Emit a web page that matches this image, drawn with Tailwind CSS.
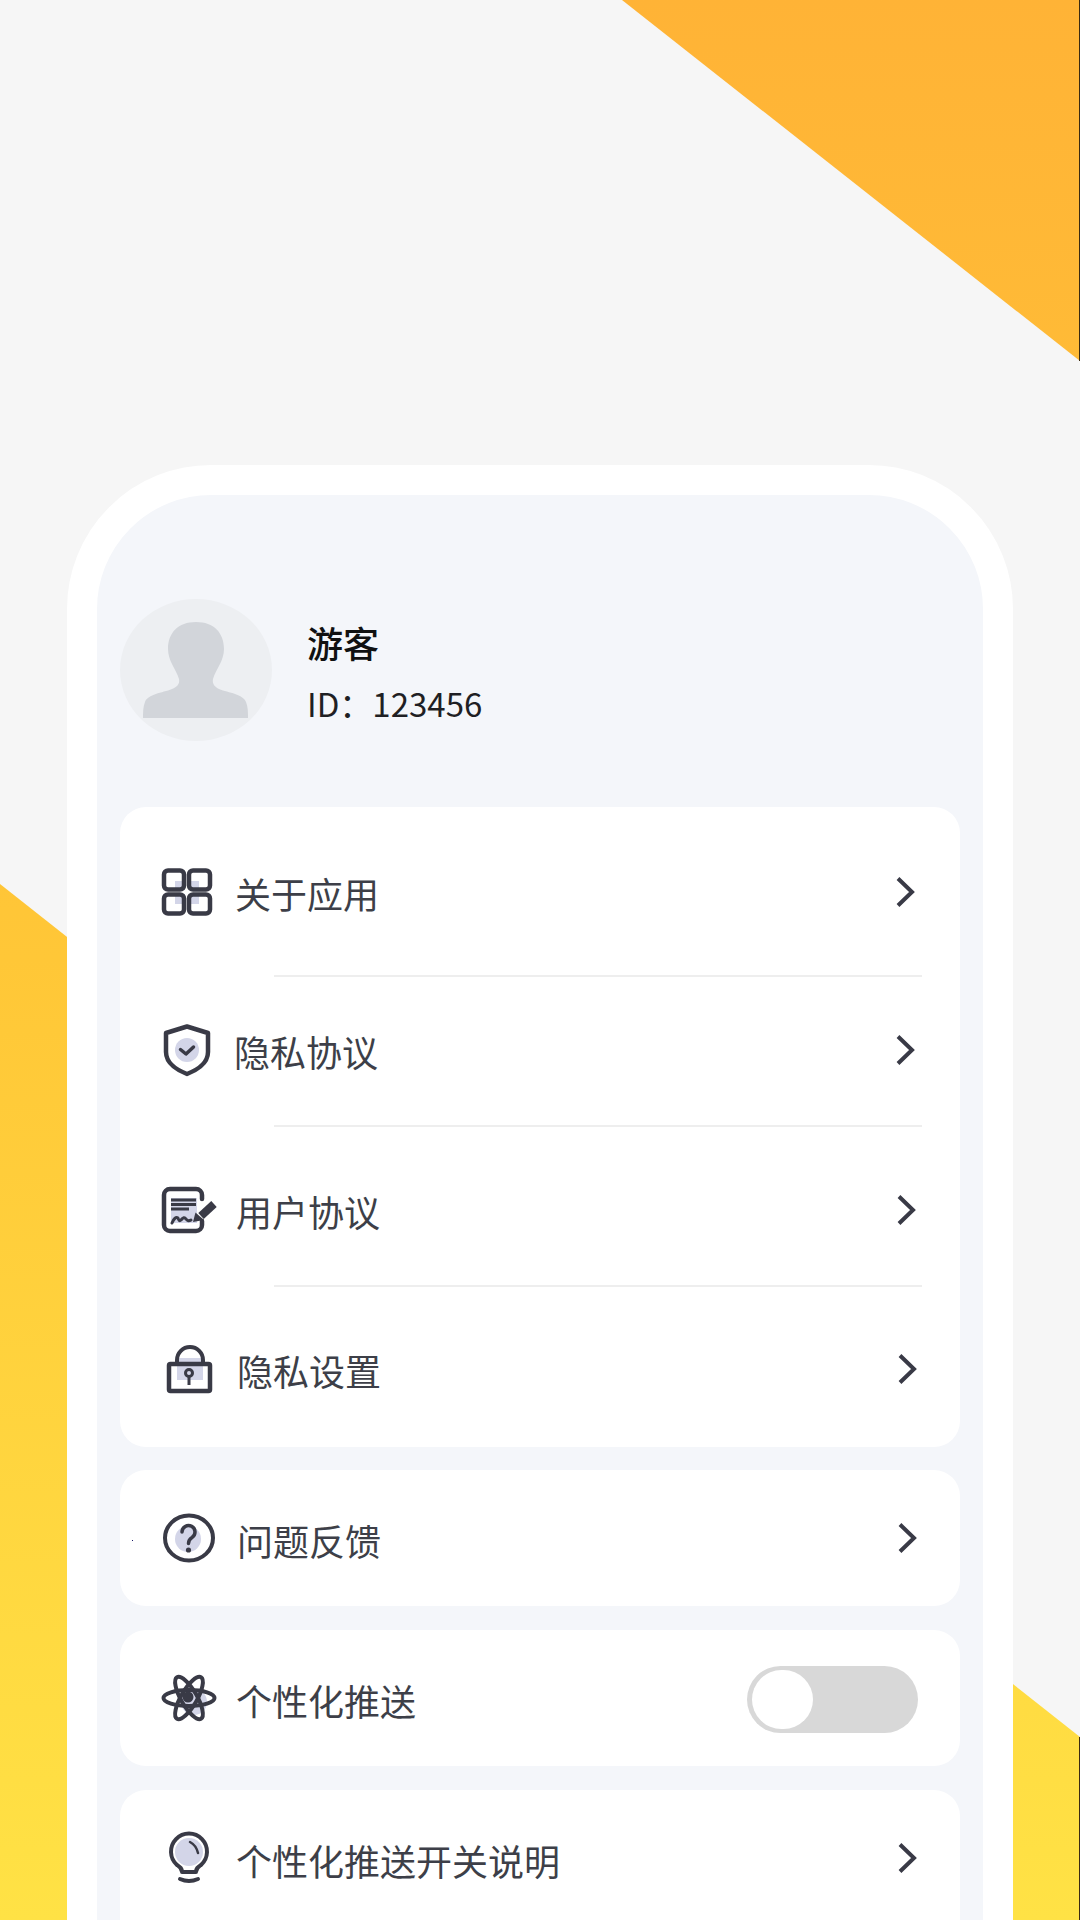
<!DOCTYPE html>
<html lang="zh-CN">
<head>
  <meta charset="UTF-8" />
  <meta name="viewport" content="width=device-width, initial-scale=1" />
  <title>我的</title>
  <script src="https://cdn.jsdelivr.net/npm/@tailwindcss/browser@4"></script>
</head>
<body class="bg-[#f6f6f6]">
<div class="relative w-[1080px] h-[1920px] overflow-hidden bg-[#f6f6f6] font-['Noto_Sans_CJK_SC','Liberation_Sans',sans-serif]">

  <!-- yellow background corners -->
  <div class="absolute inset-0 bg-linear-to-b from-[#ffb336] via-[#ffc737] to-[#ffe245] [clip-path:polygon(622px_0,1080px_0,1080px_361px)]"></div>
  <div class="absolute inset-0 bg-linear-to-b from-[#ffb336] via-[#ffc737] to-[#ffe245] [clip-path:polygon(0_884px,1080px_1737px,1080px_1920px,0_1920px)]"></div>
  <div class="absolute right-0 top-0 w-px h-[361px] bg-[#3a2a10]"></div>
  <div class="absolute right-0 top-[1737px] w-px h-[183px] bg-[#3a2a10]"></div>

  <!-- frame -->
  <div class="relative mt-[465px] mx-[67px] h-[1600px] border-[30px] border-white rounded-[144px] bg-[#f4f6fa] px-[23px] pt-[104px]">

    <!-- profile -->
    <div class="flex items-center h-[142px] mb-[66px]">
      <div class="w-[152px] h-[142px] shrink-0 rounded-[50%] bg-[#edeff2]">
        <svg width="152" height="142" viewBox="0 0 152 142">
          <path fill="#d2d5da" d="M76 23C58 23 48 34 48 50C48 62 56 70 59 80C60 85 57 88 52 90C42 94 28 95 25 103C23 108 23 113 23 119H128C128 113 128 108 126 103C123 95 109 94 99 90C95 88 92 85 93 80C96 70 104 62 104 50C104 34 94 23 76 23Z"/>
        </svg>
      </div>
      <div class="ml-[35px] mt-[5px] flex flex-col gap-[11px]">
        <div class="text-[36px] leading-[50px] font-medium text-[#111111]">游客</div>
        <div class="text-[33px] leading-[50px] text-[#1f1f24]">ID：123456</div>
      </div>
    </div>

    <!-- card 1 -->
    <div class="bg-white rounded-[26px] h-[640px] mb-[23px]">
      <div class="flex items-center h-[168px] pl-[39px] pr-[43px] pt-[2px]">
        <svg class="shrink-0" width="60" height="56" viewBox="0 0 60 56" fill="none" stroke="#393a46" stroke-width="4.500">
          <path fill="#d3d5e8" stroke="none" d="M16 17h10v9H16zM30 17h10v9H30zM16 30h10v10H16zM30 30h10v10H30z"/>
          <rect x="5" y="6.5" width="20" height="19" rx="4"/>
          <rect x="30" y="6.5" width="21" height="19" rx="4"/>
          <rect x="5" y="30.5" width="20" height="19" rx="4"/>
          <rect x="30" y="30.5" width="21" height="19" rx="4"/>
        </svg>
        <span class="ml-[16px] mt-[2px] text-[36px] leading-[50px] text-[#3d3f48]">关于应用</span>
        <svg class="ml-auto mr-[2px]" width="20" height="32" viewBox="0 0 20 32" fill="none" stroke="#393a46" stroke-width="4"><path d="M3 2.5L17 16L3 29.5"/></svg>
      </div>
      <div class="ml-[154px] mr-[38px] h-[2px] bg-[#eeeeee]"></div>
      <div class="flex items-center h-[148px] pl-[39px] pr-[43px] pb-[3px]">
        <svg class="shrink-0" width="60" height="56" viewBox="0 0 60 56" fill="none" stroke="#393a46" stroke-width="4.500">
          <circle cx="28" cy="28" r="12" fill="#d3d5e8" stroke="none"/>
          <path stroke-linejoin="round" d="M28 4.500L49 11V30C49 42 36 49 28 52C20 49 7 42 7 30V11Z"/>
          <path stroke-width="3.500" stroke-linecap="round" stroke-linejoin="round" d="M21.500 27.500L27 32L34.500 25"/>
        </svg>
        <span class="ml-[15px] mt-[2px] text-[36px] leading-[50px] text-[#3d3f48]">隐私协议</span>
        <svg class="ml-auto mr-[2px]" width="20" height="32" viewBox="0 0 20 32" fill="none" stroke="#393a46" stroke-width="4"><path d="M3 2.5L17 16L3 29.5"/></svg>
      </div>
      <div class="ml-[154px] mr-[38px] h-[2px] bg-[#eeeeee]"></div>
      <div class="flex items-center h-[158px] pl-[39px] pr-[43px] pt-[8px]">
        <svg class="shrink-0" width="60" height="56" viewBox="0 0 60 56" fill="none" stroke="#393a46" stroke-width="4.500">
          <rect x="12" y="16" width="26" height="25" fill="#d3d5e8" stroke="none"/>
          <path stroke-linecap="round" d="M43 17V13a6 6 0 0 0-6-6H11a6 6 0 0 0-6 6V43a6 6 0 0 0 6 6H37a6 6 0 0 0 6-6V39"/>
          <path stroke-width="2.800" d="M12 18H37M12 22.500H37M12 27H30"/>
          <path stroke-width="3" stroke-linecap="round" stroke-linejoin="round" d="M13 41Q16 34 19 36Q20 40 22 38Q25 34 27 37T32 38"/>
          <path stroke-width="8" d="M55 22L42 34"/>
          <path fill="#393a46" stroke="none" d="M34 40L36.500 30.500L45 38Z"/>
        </svg>
        <span class="ml-[17px] mt-[2px] text-[36px] leading-[50px] text-[#3d3f48]">用户协议</span>
        <svg class="ml-auto mr-[1px]" width="20" height="32" viewBox="0 0 20 32" fill="none" stroke="#393a46" stroke-width="4"><path d="M3 2.5L17 16L3 29.5"/></svg>
      </div>
      <div class="ml-[154px] mr-[38px] h-[2px] bg-[#eeeeee]"></div>
      <div class="flex items-center h-[160px] pl-[39px] pr-[43px] pt-[4px]">
        <svg class="shrink-0" width="60" height="56" viewBox="0 0 60 56" fill="none" stroke="#393a46" stroke-width="4.500">
          <rect x="18" y="17" width="26" height="22" fill="#d3d5e8" stroke="none"/>
          <rect x="10" y="23" width="41" height="27" rx="1.500"/>
          <path stroke-width="4" d="M18 23V19a13 13 0 0 1 26 0V23"/>
          <circle cx="30" cy="32" r="3.500" stroke-width="3"/>
          <path stroke-width="3" d="M30 35V44"/>
        </svg>
        <span class="ml-[18px] mt-[2px] text-[36px] leading-[50px] text-[#3d3f48]">隐私设置</span>
        <svg class="ml-auto" width="20" height="32" viewBox="0 0 20 32" fill="none" stroke="#393a46" stroke-width="4"><path d="M3 2.5L17 16L3 29.5"/></svg>
      </div>
    </div>

    <!-- card 2 -->
    <div class="flex items-center bg-white rounded-[26px] h-[136px] mb-[24px] pl-[39px] pr-[43px]">
      <svg class="shrink-0" width="60" height="56" viewBox="0 0 60 56" fill="none" stroke="#393a46" stroke-width="4">
        <circle cx="29" cy="29" r="13" fill="#d3d5e8" stroke="none"/>
        <ellipse cx="30" cy="28" rx="24" ry="22.500"/>
        <path stroke-width="3.500" stroke-linecap="round" d="M23 22a6.500 6.500 0 1 1 10 5.500c-2.500 1.500-3.500 3-3.500 6"/>
        <circle cx="29.500" cy="40" r="2.600" fill="#393a46" stroke="none"/>
      </svg>
      <span class="ml-[18px] mt-[3px] text-[36px] leading-[50px] text-[#3d3f48]">问题反馈</span>
      <svg class="ml-auto" width="20" height="32" viewBox="0 0 20 32" fill="none" stroke="#393a46" stroke-width="4"><path d="M3 2.5L17 16L3 29.5"/></svg>
    </div>

    <!-- card 3 -->
    <div class="flex items-center bg-white rounded-[26px] h-[136px] mb-[24px] pl-[39px] pr-[42px]">
      <svg class="shrink-0" width="60" height="56" viewBox="0 0 60 56" fill="none" stroke="#393a46" stroke-width="4">
        <circle cx="35" cy="32" r="13" fill="#d3d5e8" stroke="none"/>
        <ellipse cx="30" cy="28" rx="25.500" ry="8"/>
        <ellipse cx="30" cy="28" rx="24" ry="8" transform="rotate(60 30 28)"/>
        <ellipse cx="30" cy="28" rx="24" ry="8" transform="rotate(-60 30 28)"/>
        <circle cx="29" cy="27" r="5.500" fill="#393a46" stroke="none"/>
      </svg>
      <span class="ml-[17px] mt-[3px] text-[36px] leading-[50px] text-[#3d3f48]">个性化推送</span>
      <div class="ml-auto mt-[3px] w-[171px] h-[67px] rounded-full bg-[#d8d8d8] pl-[5px] flex items-center">
        <div class="w-[61px] h-[59px] rounded-full bg-white"></div>
      </div>
    </div>

    <!-- card 4 -->
    <div class="flex items-start bg-white rounded-[26px] h-[200px] pl-[39px] pr-[43px] pt-[40px]">
      <svg class="shrink-0" width="60" height="56" viewBox="0 0 60 56" fill="none" stroke="#393a46" stroke-width="4">
        <circle cx="30" cy="22" r="14" fill="#d3d5e8" stroke="none"/>
        <path stroke-linejoin="round" d="M23 42c0-4-2-5-5-7a18 18 0 1 1 24 0c-3 2-5 3-5 7z"/>
        <path stroke-width="2.500" stroke-linecap="round" d="M31 12q6 3 8 11"/>
        <path stroke-linecap="round" d="M21 49q9 4 18 0"/>
      </svg>
      <span class="ml-[17px] mt-[5px] text-[36px] leading-[50px] text-[#3d3f48]">个性化推送开关说明</span>
      <svg class="ml-auto mt-[12px]" width="20" height="32" viewBox="0 0 20 32" fill="none" stroke="#393a46" stroke-width="4"><path d="M3 2.5L17 16L3 29.5"/></svg>
    </div>
  </div>

  <span class="absolute left-[132px] top-[1540px] w-px h-px bg-[#1b1b6b]"></span>
</div>
</body>
</html>
